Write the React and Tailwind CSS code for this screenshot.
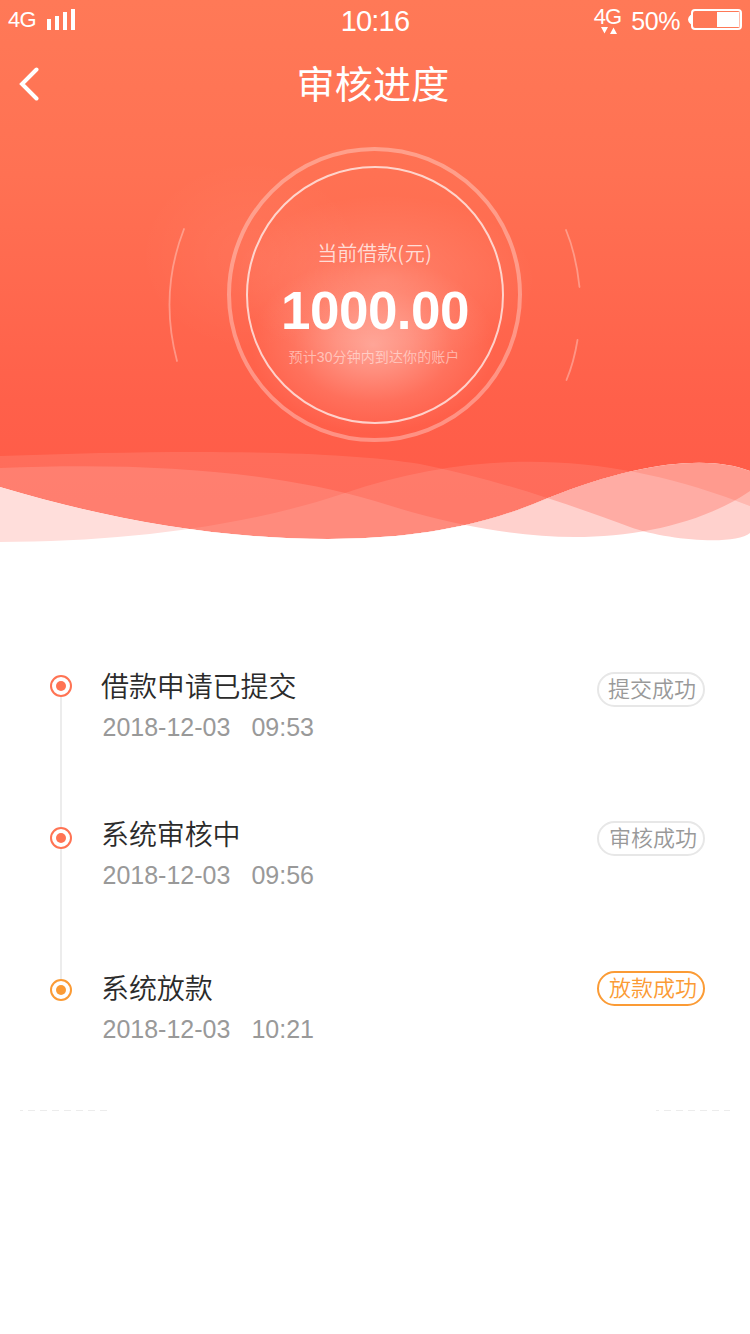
const CURVE_A =
  'M0 487 C110 520 220 539 328 539 C400 539 475 530 548 498 C640 461 710 455 750 471'
const CURVE_B =
  'M0 456 C160 450 330 449 420 464 C500 480 570 505 630 527 C665 540 735 546 750 533'
const CURVE_C =
  'M0 468 C140 462 270 470 375 501 C440 522 510 537 575 537 C640 537 705 522 750 491'
const CURVE_D =
  'M0 542 C130 542 250 525 345 493 C480 448 610 451 750 506'

const below = (curve) => `${curve} V560 H0 Z`

const STEPS = [
  { title: '借款申请已提交', date: '2018-12-03', time: '09:53', status: '提交成功' },
  { title: '系统审核中', date: '2018-12-03', time: '09:56', status: '审核成功' },
  { title: '系统放款', date: '2018-12-03', time: '10:21', status: '放款成功', active: true },
]

// row heights, dot offsets and badge offsets differ slightly from step to step
const ROW_STYLES = [
  { row: 'h-[148px]', badge: 'mt-[4px]', label: 'pl-[9px]' },
  { row: 'h-[154px]', badge: 'mt-[5px]', label: 'pl-[10px]' },
  { row: 'h-[90px]', badge: 'mt-[1px]', label: 'pl-[10px]' },
]

function HeroBackground() {
  return (
    <svg className="absolute inset-0" width="750" height="560" viewBox="0 0 750 560" fill="none">
      <defs>
        <linearGradient id="sky" x1="0" y1="0" x2="0" y2="500" gradientUnits="userSpaceOnUse">
          <stop offset="0" stopColor="#ff7957" />
          <stop offset="0.35" stopColor="#ff7153" />
          <stop offset="0.8" stopColor="#ff604a" />
          <stop offset="1" stopColor="#ff5b48" />
        </linearGradient>
        <radialGradient id="glow">
          <stop offset="0" stopColor="#fff" stopOpacity="0.4" />
          <stop offset="0.3" stopColor="#fff" stopOpacity="0.28" />
          <stop offset="0.65" stopColor="#fff" stopOpacity="0.1" />
          <stop offset="1" stopColor="#fff" stopOpacity="0" />
        </radialGradient>
        <radialGradient id="haze">
          <stop offset="0" stopColor="#fff" stopOpacity="0.15" />
          <stop offset="1" stopColor="#fff" stopOpacity="0" />
        </radialGradient>
        <clipPath id="above-a">
          <path d={`${CURVE_A} V0 H0 Z`} />
        </clipPath>
        <clipPath id="below-a">
          <path d={below(CURVE_A)} />
        </clipPath>
        <clipPath id="below-c">
          <path d={below(CURVE_C)} />
        </clipPath>
        <clipPath id="below-d">
          <path d={below(CURVE_D)} />
        </clipPath>
        <clipPath id="left">
          <rect width="400" height="560" />
        </clipPath>
        <clipPath id="right">
          <rect x="400" width="350" height="560" />
        </clipPath>
      </defs>

      <g clipPath="url(#above-a)">
        <rect width="750" height="560" fill="url(#sky)" />
        <ellipse cx="373" cy="345" rx="122" ry="88" fill="url(#glow)" />
        <ellipse cx="385" cy="280" rx="150" ry="85" fill="url(#haze)" />
        <ellipse cx="250" cy="255" rx="110" ry="95" fill="url(#haze)" opacity="0.35" />
        <path d={below(CURVE_B)} fill="#fff" fillOpacity="0.1" />
        <path d={below(CURVE_C)} fill="#fff" fillOpacity="0.13" />
        <path d={below(CURVE_D)} fill="#fff" fillOpacity="0.1" />
      </g>

      <g clipPath="url(#below-a)">
        <g clipPath="url(#left)">
          <rect width="400" height="560" fill="#ffdedb" />
          <path d={below(CURVE_D)} fill="#fff" />
        </g>
        <g clipPath="url(#right)">
          <rect x="400" width="350" height="560" fill="#ff9a8e" />
          <path d={below(CURVE_C)} fill="#ffb8b0" />
          <path d={below(CURVE_D)} fill="#ffaca4" />
          <path d={below(CURVE_B)} fill="#ffd1cd" />
          <g clipPath="url(#below-d)">
            <path d={below(CURVE_C)} fill="#ffd1cd" />
          </g>
          <g clipPath="url(#below-c)">
            <path d={below(CURVE_B)} fill="#fff" />
          </g>
        </g>
      </g>

      <circle cx="374.5" cy="294.5" r="145.5" stroke="#fff" strokeOpacity="0.32" strokeWidth="4" />
      <circle cx="375" cy="295" r="128" stroke="#fff" strokeOpacity="0.7" strokeWidth="2" />
      <g stroke="#fff" strokeOpacity="0.32" strokeWidth="1.8" strokeLinecap="round">
        <path d="M184 229 Q159 293 177 361" />
        <path d="M566 230 Q576 254 579.500 287" />
        <path d="M577.500 340 Q574 362 566.500 380" />
      </g>
    </svg>
  )
}

function StatusBar() {
  return (
    <div className="flex h-10 items-start text-white">
      <div className="flex w-[250px] pl-[8px]">
        <span className="mt-[8px] text-[22px] leading-6 tracking-[-0.800px]">4G</span>
        <svg className="ml-[11px] mt-[9px]" width="29" height="21" fill="currentColor">
          <rect x="0" y="10" width="4" height="11" />
          <rect x="8" y="7" width="4" height="14" />
          <rect x="16" y="3" width="4" height="18" />
          <rect x="24" y="0" width="4" height="21" />
        </svg>
      </div>
      <span className="mt-[5px] w-[250px] text-center text-[29px] leading-8 tracking-[-0.8px]">10:16</span>
      <div className="flex w-[250px] justify-end pr-[8px]">
        <div className="mr-[10px] mt-[6px] flex flex-col items-center">
          <span className="text-[22px] leading-[22px] tracking-[-1px]">4G</span>
          <svg className="-mt-px ml-[3px]" width="16" height="7" fill="currentColor">
            <path d="M0 0H7L3.500 6.500Z M9 7H16L12.500 0.500Z" />
          </svg>
        </div>
        <span className="mt-[6px] text-[25px] leading-[30px] tracking-[-0.4px]">50%</span>
        <svg className="ml-[8px] mt-[9px]" width="54" height="21" fill="none">
          <rect x="4" y="1" width="49" height="19" rx="3" stroke="#fff" strokeWidth="2" />
          <path d="M4 5 L2.500 6 Q0 8 0 10.500 Q0 13 2.500 15 L4 16 Z" fill="#fff" />
          <rect x="29" y="3" width="22.500" height="15" fill="#fff" />
        </svg>
      </div>
    </div>
  )
}

function Hero() {
  return (
    <header className="relative h-[560px]">
      <HeroBackground />
      <div className="relative">
        <StatusBar />
        <div className="grid h-[88px] grid-cols-[100px_1fr_104px] items-center text-white">
          <svg className="ml-[18px]" width="22" height="34" viewBox="0 0 22 34" fill="none">
            <path d="M18.500 2.500 L4 17 L18.500 31.500" stroke="currentColor" strokeWidth="4" strokeLinecap="round" />
          </svg>
          <h1 className="pt-[2px] text-center text-[38px] leading-[56px] tracking-[0.3px]">审核进度</h1>
        </div>
        <div className="flex flex-col items-center pt-[110px] text-white">
          <p className="text-[20px] font-[350] leading-[30px] text-white/75">
            当前借款
            <span className="font-['Noto_Sans_CJK_SC'] tracking-[0.700px]">(元)</span>
          </p>
          <p className="mt-[12px] text-[53px] font-bold leading-[60px] tracking-[-0.500px]">1000.00</p>
          <p className="mt-[5px] pr-[2px] text-[14px] font-[350] leading-[22px] tracking-[0.100px] text-white/50">
            预计30分钟内到达你的账户
          </p>
        </div>
      </div>
    </header>
  )
}

function Step({ step, index }) {
  const styles = ROW_STYLES[index]

  return (
    <li className={`flex items-start ${styles.row}`}>
      <div className="flex-1">
        <h2 className="text-[28px] leading-[40px] tracking-[-0.100px] text-[#2b2b2b]">{step.title}</h2>
        <p className="mt-[4px] flex gap-[21px] pl-[1.500px] text-[25px] leading-[30px] text-[#999]">
          <span>{step.date}</span>
          <span>{step.time}</span>
        </p>
      </div>
      <span
        className={`h-[35px] w-[108px] whitespace-nowrap rounded-full border-2 text-[22px] leading-[32px] ${styles.badge} ${styles.label} ${
          step.active ? 'border-[#fb9b35] text-[#fb9b35]' : 'border-[#e7e7e7] text-[#999]'
        }`}
      >
        {step.status}
      </span>
    </li>
  )
}

function Dot({ active }) {
  return (
    <span
      className={`flex size-[22px] items-center justify-center rounded-full border-2 ${
        active ? 'border-[#fb9b35]' : 'border-[#ff7353]'
      }`}
    >
      <span className={`size-[10px] rounded-full ${active ? 'bg-[#fb9b35]' : 'bg-[#ff7353]'}`} />
    </span>
  )
}

function Timeline() {
  return (
    <section className="flex h-[443px] pl-[50px] pr-[45px] pt-[108px]">
      <div className="mr-[29px] flex w-[22px] flex-col items-center pt-[7px]">
        {STEPS.map((step, i) => (
          <div key={step.title} className="flex flex-col items-center">
            {i > 0 && <span className="h-[130px] w-[2px] bg-[#ececec]" />}
            <Dot active={step.active} />
          </div>
        ))}
      </div>
      <ol className="flex-1 font-[350]">
        {STEPS.map((step, i) => (
          <Step key={step.title} step={step} index={i} />
        ))}
      </ol>
    </section>
  )
}

function Divider() {
  return (
    <div className="mt-[107px] flex justify-between px-[20px]">
      <svg width="88" height="1">
        <path d="M-4 0.500H87" stroke="#ececec" strokeDasharray="7 5" />
      </svg>
      <svg width="74" height="1">
        <path d="M-4 0.500H74" stroke="#ececec" strokeDasharray="7 5" />
      </svg>
    </div>
  )
}

export default function App() {
  return (
    <main className="h-[1334px] w-[750px] overflow-hidden bg-white font-['Liberation_Sans','Noto_Sans_CJK_SC',sans-serif]">
      <Hero />
      <Timeline />
      <Divider />
    </main>
  )
}
